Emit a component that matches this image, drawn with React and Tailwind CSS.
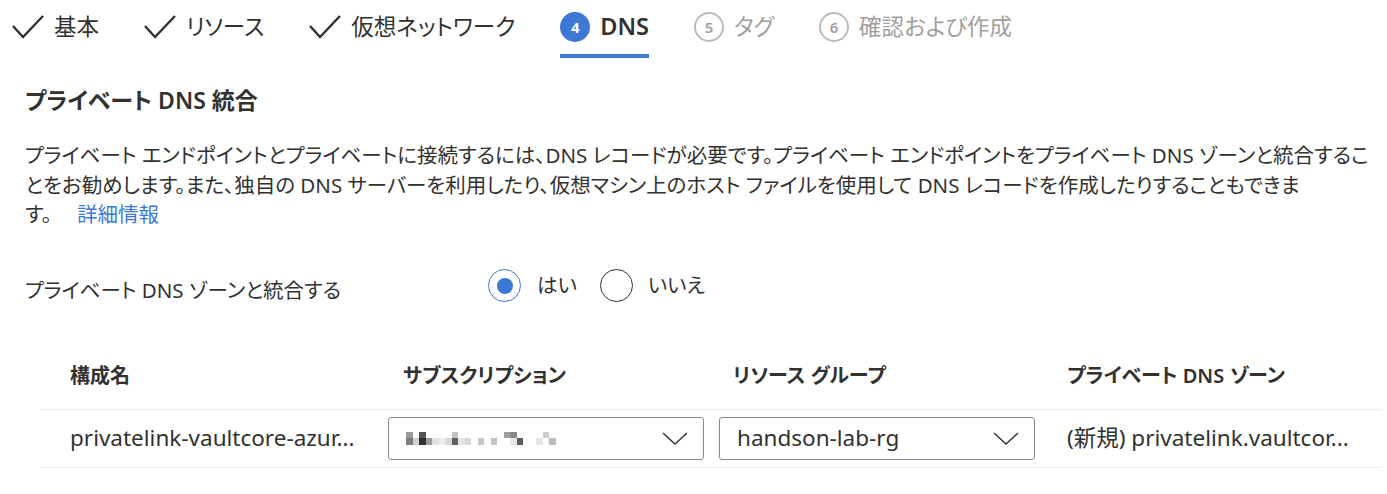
import React from 'react';

const font = "font-['Noto_Sans','Noto_Sans_CJK_JP',sans-serif] [font-feature-settings:'palt']";

function Check() {
  return (
    <svg width="32" height="24" viewBox="0 0 32 24" fill="none" className="shrink-0">
      <polyline points="1,11 11,22 31,1" stroke="#323130" strokeWidth="2.4" strokeLinejoin="miter" />
    </svg>
  );
}

function StepCircle({ n, active }) {
  if (active) {
    return (
      <span className="w-[30px] h-[30px] rounded-full bg-[#3c78d4] text-white text-[15px] font-bold flex items-center justify-center shrink-0">
        {n}
      </span>
    );
  }
  return (
    <span className="w-[30px] h-[30px] rounded-full border-2 border-[#bdbbb9] text-[#a19f9d] text-[15px] font-semibold flex items-center justify-center shrink-0">
      {n}
    </span>
  );
}

const steps = [
  { label: '基本', done: true },
  { label: 'リソース', done: true },
  { label: '仮想ネットワーク', done: true },
  { label: 'DNS', n: 4, active: true },
  { label: 'タグ', n: 5 },
  { label: '確認および作成', n: 6 },
];

// redacted subscription name (mosaic)
const mosaic = [
  ['#9a9a9a', '#7d7d7d'], ['#ffffff', '#d0d0d0'], ['#555555', '#2f2f2f'], ['#ffffff', '#9c9c9c'],
  ['#ffffff', '#e0e0e0'], ['#ffffff', '#ededed'], ['#ffffff', '#d8d8d8'], ['#c4c4c4', '#5f5f5f'],
  ['#ffffff', '#e4e4e4'], ['#ffffff', '#d9d9d9'], ['#ffffff', '#ffffff'], ['#ffffff', '#c6c6c6'],
  ['#ffffff', '#ffffff'], ['#ffffff', '#c2c2c2'], ['#ffffff', '#ffffff'], ['#9e9e9e', '#ffffff'],
  ['#8a8a8a', '#e6e6e6'], ['#ffffff', '#5c5c5c'], ['#ffffff', '#ffffff'], ['#ffffff', '#ffffff'],
  ['#ffffff', '#e6e6e6'], ['#cfcfcf', '#ffffff'], ['#ffffff', '#bdbdbd'],
];

function Chevron() {
  return (
    <svg width="26" height="13" viewBox="0 0 26 13" fill="none">
      <polyline points="1,1 13,12 25,1" stroke="#323130" strokeWidth="1.4" />
    </svg>
  );
}

function Dropdown({ children }) {
  return (
    <div className="w-[316px] h-[43px] border border-[#8a8886] rounded-[3px] flex items-center justify-between pl-[17px] pr-[15px]">
      <div className="flex items-center">{children}</div>
      <Chevron />
    </div>
  );
}

export default function App() {
  return (
    <div className={`${font} w-[1387px] h-[494px] bg-white text-[#323130] overflow-hidden`}>
      {/* Wizard steps */}
      <div className="flex items-stretch h-[58px] pl-[12px] gap-[45px]">
        {steps.map((s) => (
          <div
            key={s.label}
            className={`flex items-center gap-[10px] border-b-[4px] ${s.active ? 'border-[#3c78d4]' : 'border-transparent'}`}
          >
            {s.done ? <Check /> : <StepCircle n={s.n} active={s.active} />}
            <span
              className={`text-[22.5px] ${s.active ? 'font-semibold text-[#323130] text-[23.5px]' : s.done ? 'text-[#323130]' : 'text-[#a19f9d]'}`}
            >
              {s.label}
            </span>
          </div>
        ))}
      </div>

      <div className="pl-[25px] pr-[18px]">
        <h2 className="mt-[27px] text-[23px] leading-[30px] font-semibold">プライベート DNS 統合</h2>

        <p className="mt-[26px] text-[20.5px] leading-[29.5px]">
          プライベート エンドポイントとプライベートに接続するには、DNS レコードが必要です。プライベート エンドポイントをプライベート DNS ゾーンと統合するこ
          <br />
          とをお勧めします。また、独自の DNS サーバーを利用したり、仮想マシン上のホスト ファイルを使用して DNS レコードを作成したりすることもできま
          <br />
          す。 <a className="ml-[20px] text-[#3c78d4]">詳細情報</a>
        </p>

        <div className="mt-[39px] flex items-center h-[34px]">
          <div className="w-[463px] text-[20.5px] pt-[10px]">プライベート DNS ゾーンと統合する</div>
          <div className="flex items-center">
            <span className="w-[33px] h-[33px] rounded-full border border-[#3c78d4] flex items-center justify-center">
              <span className="w-[16px] h-[16px] rounded-full bg-[#3c78d4]" />
            </span>
            <span className="ml-[16px] text-[20.5px]">はい</span>
            <span className="ml-[23px] w-[33px] h-[33px] rounded-full border border-[#323130]" />
            <span className="ml-[15px] text-[20.5px]">いいえ</span>
          </div>
        </div>
      </div>

      {/* Configuration table */}
      <div className="mt-[40px] ml-[40px] w-[1342px]">
        <div className="grid grid-cols-[333px_331px_333px_1fr] h-[67px] items-center border-b border-[#edebe9] pl-[15px] text-[20px] font-semibold">
          <div className="pl-[15px]">構成名</div>
          <div className="pl-[15px]">サブスクリプション</div>
          <div className="pl-[14px]">リソース グループ</div>
          <div className="pl-[15px]">プライベート DNS ゾーン</div>
        </div>
        <div className="grid grid-cols-[333px_331px_333px_1fr] h-[58px] items-center border-b border-[#edebe9] pl-[15px] text-[22.5px]">
          <div className="pl-[15px] whitespace-nowrap">privatelink-vaultcore-azur...</div>
          <Dropdown>
            <div className="flex">
              {mosaic.map((c, i) => (
                <div key={i} className="flex flex-col">
                  <div className="w-[6.5px] h-[6px]" style={{ background: c[0] }} />
                  <div className="w-[6.5px] h-[7px]" style={{ background: c[1] }} />
                </div>
              ))}
            </div>
          </Dropdown>
          <Dropdown>
            <span>handson-lab-rg</span>
          </Dropdown>
          <div className="pl-[15px] whitespace-nowrap">(新規) privatelink.vaultcor...</div>
        </div>
      </div>
    </div>
  );
}
